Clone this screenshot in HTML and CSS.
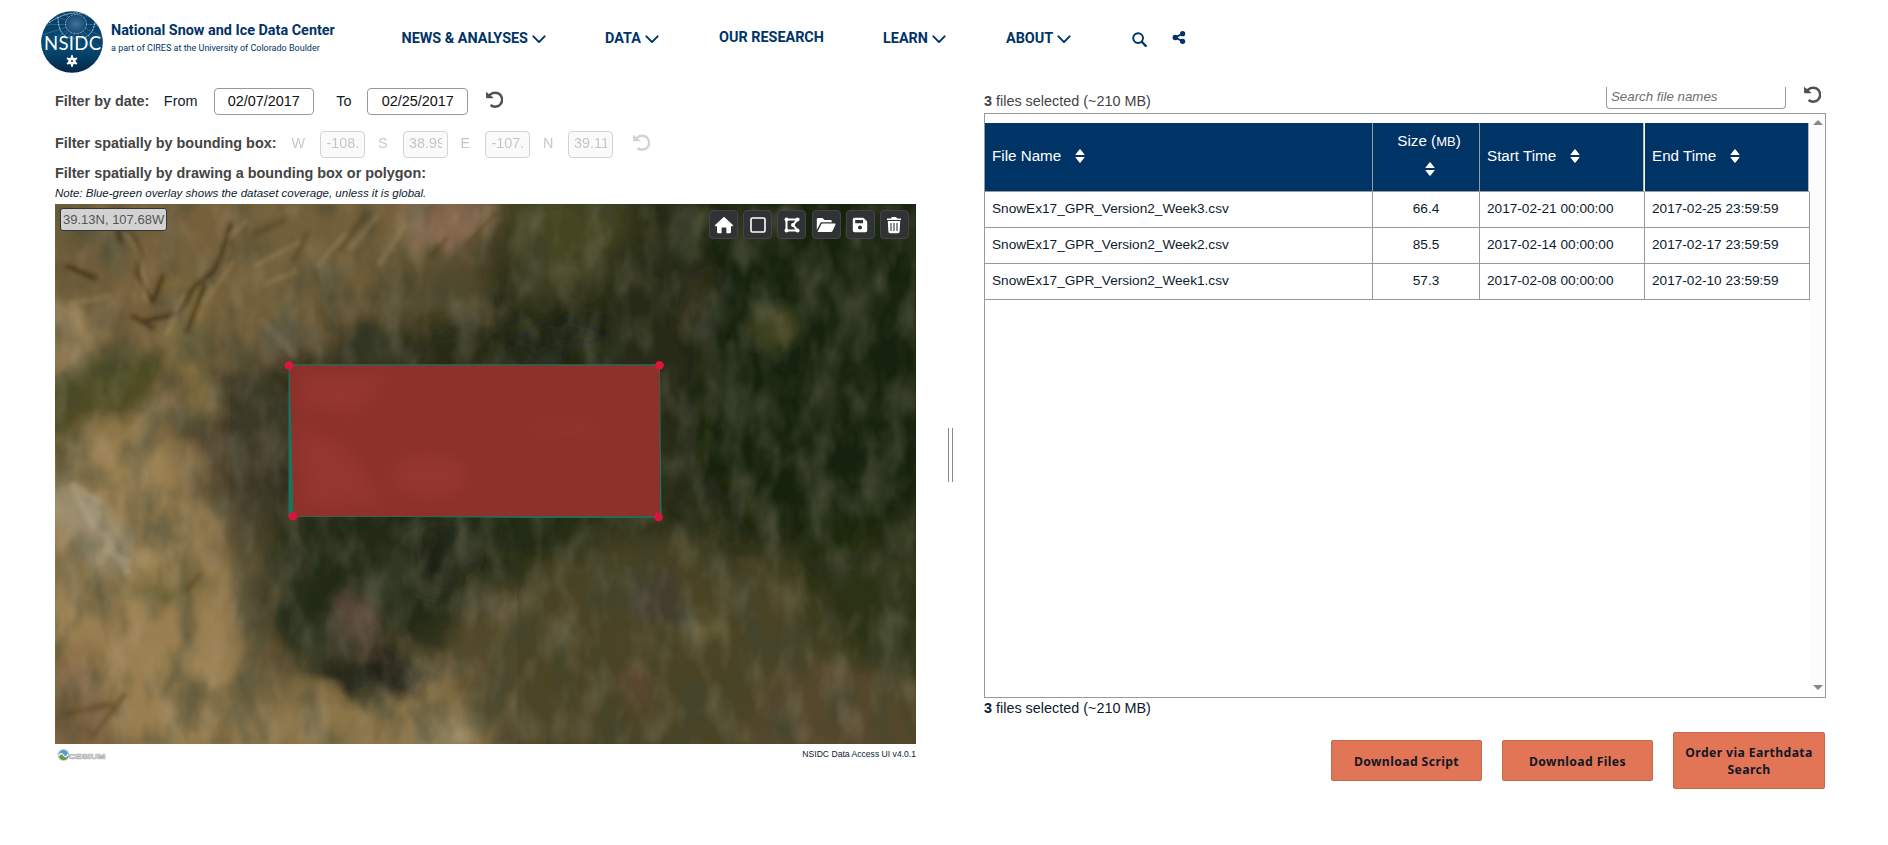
FILE: index.html
```html
<!DOCTYPE html>
<html lang="en">
<head>
<meta charset="utf-8">
<title>NSIDC Data Access</title>
<link rel="stylesheet" href="styles.css">
</head>
<body>
<svg width="0" height="0" class="defs">
  <symbol id="undo" viewBox="0 0 17 17"><path d="M2.6 6.2A7 7 0 1 1 4.6 14" fill="none" stroke="currentColor" stroke-width="2.5"/><path d="M0 .8L7.2 6.6 7 7.3H.9Q.1 7.3.1 6.5Z" fill="currentColor"/></symbol>
  <symbol id="chev" viewBox="0 0 14 9"><path d="M1.4 1.3L7 7.1 12.6 1.3" fill="none" stroke="currentColor" stroke-width="1.9" stroke-linecap="round" stroke-linejoin="round"/></symbol>
  <symbol id="sort" viewBox="0 0 10 14"><path d="M.2 6L4.4.6Q5 0 5.6.6L9.8 6ZM.2 8L4.4 13.4Q5 14 5.6 13.4L9.8 8Z" fill="#fff"/></symbol>
</svg>
<header class="header">
  <svg class="logo" viewBox="0 0 62 62">
    <defs>
      <linearGradient id="lg" x1="0" y1="0" x2="0" y2="1"><stop offset="0" stop-color="#063e68"/><stop offset=".6" stop-color="#064a74"/><stop offset="1" stop-color="#032748"/></linearGradient>
      <radialGradient id="lg2"><stop offset="0" stop-color="#44719a"/><stop offset="1" stop-color="#174b75"/></radialGradient>
      <clipPath id="lc"><circle cx="31" cy="31" r="30.8"/></clipPath>
    </defs>
    <g clip-path="url(#lc)">
      <rect width="62" height="62" fill="url(#lg)"/>
      <g fill="none" stroke="#b8ccdc" stroke-width=".5" opacity=".5">
        <path d="M35 13L-2 14M35 13L-2 25M35 13L2 36M35 13L12 36M35 13L22 36M35 13L31 36M35 13L40 36M35 13L49 36M35 13L58 36M35 13L64 27M35 13L64 14M35 13L8 3M35 13L18-2M35 13L54-1"/>
      </g>
      <ellipse cx="35" cy="13" rx="10" ry="9" fill="url(#lg2)"/>
      <g fill="none" stroke="#dbe7ef" stroke-width=".9" stroke-dasharray="2.5 .7" opacity=".85">
        <ellipse cx="35" cy="13" rx="10.5" ry="9.5" stroke-width=".6"/>
        <path d="M17 6Q17 28 35 28T54 9M8 12Q20 3 34 2T57 15"/>
      </g>
      <rect x="0" y="27" width="62" height="13" fill="#064570" opacity=".55"/>
      <text x="31.5" y="39" text-anchor="middle" class="logo-text" textLength="57">NSIDC</text>
      <g stroke="#fff" stroke-width="2" transform="translate(31 50)"><path d="M0-5.8V5.8M-5-2.9L5 2.9M-5 2.9L5-2.9"/><circle r="3" fill="none" stroke-width="1.5"/></g>
      <circle cx="31" cy="50" r="1" fill="#04345c"/>
    </g>
  </svg>
  <div class="brand"><div class="brand-name"><span>National Snow and Ice Data Center</span></div><div class="brand-sub">a part of CIRES at the University of Colorado Boulder</div></div>
  <nav class="nav">
    <a class="n1">NEWS &amp; ANALYSES<svg><use href="#chev"/></svg></a>
    <a class="n2">DATA<svg><use href="#chev"/></svg></a>
    <a class="n3">OUR RESEARCH</a>
    <a class="n4">LEARN<svg><use href="#chev"/></svg></a>
    <a class="n5">ABOUT<svg><use href="#chev"/></svg></a>
    <svg class="search" viewBox="0 0 15 15"><circle cx="6.1" cy="6.1" r="4.9" fill="none" stroke="#036" stroke-width="1.9"/><path d="M9.8 9.8L13.7 13.9" stroke="#036" stroke-width="2.3" stroke-linecap="round"/></svg>
    <svg class="share" viewBox="0 0 14 14"><g fill="#036"><circle cx="3" cy="7" r="2.9"/><circle cx="10.9" cy="2.9" r="2.8"/><circle cx="10.9" cy="11.1" r="2.8"/></g><path d="M11 2.8L3 7l8 4.2" fill="none" stroke="#036" stroke-width="1.9"/></svg>
  </nav>
</header>
<main class="main">
  <section class="left">
    <div class="row row-date"><b>Filter by date:</b><span class="from">From</span><div class="date">02/07/2017</div><span class="to">To</span><div class="date d2">02/25/2017</div><svg class="undo"><use href="#undo"/></svg></div>
    <div class="row row-box"><b>Filter spatially by bounding box:</b>
      <div class="faded"><span>W</span><div class="num"><i>-108.26</i></div><span>S</span><div class="num"><i>38.995</i></div><span>E</span><div class="num"><i>-107.87</i></div><span>N</span><div class="num"><i>39.11</i></div><svg class="undo"><use href="#undo"/></svg></div>
    </div>
    <div class="row row-draw"><b>Filter spatially by drawing a bounding box or polygon:</b></div>
    <div class="note"><span>Note: Blue-green overlay shows the dataset coverage, unless it is global.</span></div>
    <div class="map">
      <svg class="terrain" viewBox="0 0 861 540">
        <defs>
          <filter id="b1" x="-30%" y="-30%" width="160%" height="160%"><feGaussianBlur stdDeviation="18"/></filter>
          <filter id="b2" x="-40%" y="-40%" width="180%" height="180%"><feGaussianBlur stdDeviation="9"/></filter>
          <filter id="b3" x="-30%" y="-30%" width="160%" height="160%"><feGaussianBlur stdDeviation="2.2"/></filter>
          <filter id="warp" x="0" y="0" width="100%" height="100%"><feTurbulence type="fractalNoise" baseFrequency=".02" numOctaves="3" seed="4"/><feDisplacementMap in="SourceGraphic" scale="40" xChannelSelector="R" yChannelSelector="G"/></filter>
          <filter id="grainDark" x="0" y="0" width="100%" height="100%"><feTurbulence type="fractalNoise" baseFrequency=".028 .017" numOctaves="4" seed="8"/><feColorMatrix values="0 0 0 0 .05  0 0 0 0 .06  0 0 0 0 .03  2.8 0 0 0 -1.15"/><feGaussianBlur stdDeviation="1.2 2"/></filter>
          <filter id="grainLight" x="0" y="0" width="100%" height="100%"><feTurbulence type="fractalNoise" baseFrequency=".04 .022" numOctaves="4" seed="21"/><feColorMatrix values="0 0 0 0 .66  0 0 0 0 .56  0 0 0 0 .42  0 2.2 0 0 -.95"/><feGaussianBlur stdDeviation="1.2 2"/></filter>
        </defs>
        <rect width="861" height="540" fill="#574a2d"/>
        <g filter="url(#warp)">
        <g filter="url(#b1)">
          <path d="M-40-40H340L400 60 260 120 130 220 60 260-40 250Z" fill="#725e3b"/>
          <path d="M460-40H900V420H700L560 300 300 330 160 260 170 160 300 130 420 110Z" fill="#252b14"/>
          <path d="M640-40H900V360H740L640 260Z" fill="#172110"/>
          <path d="M450-20H580L560 60 480 100Z" fill="#444521"/>
          <path d="M110 165L230 150 240 320H130Z" fill="#3d3828"/>
          <path d="M230 300H640L520 360 440 380 350 480 250 485 215 420Z" fill="#242c15"/>
          <path d="M-30 260L110 190 150 290 180 400 220 560H-30Z" fill="#9a8053"/>
          <path d="M420 390L560 335 800 370 890 580H380Z" fill="#53482c"/>
          <path d="M720 360L900 330V480L800 470Z" fill="#2d3019"/>
          <path d="M170 490L380 450 460 580H170Z" fill="#8b7448"/>
        </g>
        <g filter="url(#b2)">
          <path d="M330-10H445L400 50 370 45Z" fill="#86674e"/>
          <path d="M-20 175L60 145 130 145 90 195-20 250Z" fill="#4a4924"/>
          <path d="M-10 85L40 130 35 160-10 170Z" fill="#95805a"/>
          <path d="M125 60L160 80 145 170 165 215 150 225 115 170Z" fill="#857243"/>
          <path d="M90 370L150 375 140 395 60 395Z" fill="#675e31"/>
          <path d="M-10 275L40 285 80 360 60 370-10 310Z" fill="#9c9073"/>
          <path d="M-10 440L45 455 70 560H-10Z" fill="#7b6040"/>
          <ellipse cx="720" cy="120" rx="27" ry="27" fill="#424420"/>
          <ellipse cx="640" cy="100" rx="14" ry="42" fill="#383524"/>
          <ellipse cx="500" cy="134" rx="55" ry="18" fill="#131d0a"/>
          <ellipse cx="302" cy="418" rx="20" ry="32" fill="#5c483b"/>
          <ellipse cx="312" cy="470" rx="60" ry="24" fill="#222416"/>
          <ellipse cx="385" cy="350" rx="35" ry="34" fill="#222518"/>
          <ellipse cx="604" cy="396" rx="24" ry="28" fill="#4c3f37"/>
          <ellipse cx="650" cy="420" rx="25" ry="10" fill="#75683f"/>
          <ellipse cx="456" cy="405" rx="16" ry="10" fill="#736850"/>
          <ellipse cx="584" cy="484" rx="16" ry="18" fill="#704e3b"/>
          <ellipse cx="395" cy="522" rx="26" ry="16" fill="#988763"/>
          <path d="M710 470L820 460 880 560H690Z" fill="#614d30"/>
          <path d="M330 65L440 80 420 120 290 110Z" fill="#544b2e"/>
          <ellipse cx="224" cy="134" rx="26" ry="20" fill="#6e624c"/>
        </g>
        </g>
        <rect width="175" height="540" fill="#9a7840" opacity=".08"/>
        <rect x="462" y="300" width="399" height="240" fill="#26300e" opacity=".18"/>
        <rect width="861" height="540" filter="url(#grainDark)" opacity=".55"/>
        <rect width="861" height="540" filter="url(#grainLight)" opacity=".2"/>
        <g filter="url(#b3)" fill="none" stroke-linecap="round">
          <path d="M68 22Q92 45 82 68L96 96M165 55L158 68 140 82 122 110 86 118M150 80L132 128M58 8L66 38M108 72L98 98M12 62L40 74M176 20L166 52M78 112L98 124" stroke="#2f210c" stroke-width="3" opacity=".8"/>
          <path d="M72 30Q92 55 90 95M190 18L176 32M128 92L112 130M178 58L150 98M200 62L245 38M15 100L55 92M210 80L240 68M290 30L262 62M322 12L296 44M350 20L325 60" stroke="#a18b5d" stroke-width="3.5" opacity=".5"/>
          <path d="M310 12L284 46M200 30L230 16M252 30L238 58M440 10L412 40M392 34L376 52" stroke="#4c3b1c" stroke-width="4" opacity=".55"/>
          <path d="M22 290L38 322M50 330L60 350 72 368M18 282L45 298M52 346L72 358" stroke="#b0a68b" stroke-width="7" opacity=".5"/>
          <path d="M208 118L238 150" stroke="#867961" stroke-width="8" opacity=".35"/>
          <path d="M38 532L70 490M10 510L55 500M132 386L145 370" stroke="#493617" stroke-width="4" opacity=".5"/>
          <path d="M370 372L400 325" stroke="#161b0e" stroke-width="7" opacity=".6"/>
          <path d="M676 140V215" stroke="#3c4536" stroke-width="7" opacity=".5"/>
        </g>
        <path d="M233.5 160.3H605L606.5 314H480L350 313H233.5Z" fill="#187461"/>
        <path d="M234.5 161.6H604.5L605 312.3H238.5L237 250Z" fill="#8d312b"/>
        <g filter="url(#b2)" fill="#a34338" opacity=".4"><path d="M245 172H335L300 210 250 200Z"/><path d="M245 225L290 240 330 300 250 302Z"/><ellipse cx="375" cy="272" rx="38" ry="22"/><ellipse cx="510" cy="225" rx="40" ry="8" opacity=".6"/></g>
        <g fill="#dc143c"><circle cx="234" cy="161.3" r="4.3"/><circle cx="604.5" cy="161.3" r="4.3"/><circle cx="238" cy="312.3" r="4.3"/><circle cx="603.5" cy="313" r="4.3"/></g>
      </svg>
      <div class="coords">39.13N, 107.68W</div>
      <div class="tools">
        <div class="tool"><svg viewBox="0 0 20 20"><path d="M10 1.8L.8 10.2Q.8 11.2 2 11.2H3V17Q3 18.2 4.2 18.2H7.6V13.5Q7.6 12.6 8.5 12.6H11.5Q12.4 12.6 12.4 13.5V18.2H15.8Q17 18.2 17 17V11.2H18Q19.2 11.2 19.2 10.2Z" fill="#fff"/></svg></div>
        <div class="tool"><svg viewBox="0 0 20 20"><rect x="3" y="3" width="14" height="14" rx="1.5" fill="none" stroke="#fff" stroke-width="1.6"/></svg></div>
        <div class="tool"><svg viewBox="0 0 20 20"><path d="M4.5 4.5H15.5L11 10 15.5 15.5H4.5Z" fill="none" stroke="#fff" stroke-width="2"/><g fill="#fff"><circle cx="4.5" cy="4.5" r="2"/><circle cx="15.5" cy="4.5" r="2"/><circle cx="11" cy="10" r="2"/><circle cx="15.5" cy="15.5" r="2"/><circle cx="4.5" cy="15.5" r="2"/></g></svg></div>
        <div class="tool"><svg viewBox="0 0 20 20"><path d="M.8 15V4.2Q.8 3 2 3H6.5L8.5 5H14.5Q15.8 5 15.8 6.3V7.3H6Q4.7 7.3 4.1 8.5ZM1.5 17L5.2 9.5Q5.6 8.5 6.7 8.5H18.8Q20 8.5 19.4 9.8L16.5 16Q16 17 15 17Z" fill="#fff"/></svg></div>
        <div class="tool"><svg viewBox="0 0 20 20"><path fill-rule="evenodd" d="M4.5 2.8H13.4L17.2 6.6V15.5Q17.2 17.2 15.5 17.2H4.5Q2.8 17.2 2.8 15.5V4.5Q2.8 2.8 4.5 2.8ZM5.2 5V8.2H13V5ZM10 10.5A2 2 0 1 0 10 14.6A2 2 0 1 0 10 10.5Z" fill="#fff"/></svg></div>
        <div class="tool"><svg viewBox="0 0 20 20"><path d="M3 3.4H7L7.8 2H12.2L13 3.4H17V5H3ZM3.8 6H16.2L15.6 16.8Q15.5 18.2 14 18.2H6Q4.5 18.2 4.4 16.8Z" fill="#fff"/><path d="M7 8V16M10 8V16M13 8V16" stroke="#303336" stroke-width="1.1"/></svg></div>
      </div>
    </div>
    <div class="credit">
      <svg class="cesium" viewBox="0 0 52 14"><circle cx="6.5" cy="7" r="6" fill="#ccc"/><circle cx="6.5" cy="7" r="4.9" fill="#549ed0"/><path d="M1.7 8.3Q4 3.5 6.5 7.3T11.3 8Q10 12 6.5 11.9T1.7 8.3Z" fill="#6d9e3e"/><path d="M1.7 8.2Q4 3.5 6.5 7.3T11 5.7" fill="none" stroke="#fff" stroke-width="1.1"/><text x="11.5" y="10.5" textLength="37" lengthAdjust="spacingAndGlyphs" class="cesium-text">CESIUM</text></svg>
      <span class="version">NSIDC Data Access UI v4.0.1</span>
    </div>
  </section>
  <div class="splitter"></div>
  <section class="right">
    <div class="top"><div class="count"><b>3</b> files selected (~210 MB)</div><div class="find"><div class="find-input">Search file names</div><svg class="undo"><use href="#undo"/></svg></div></div>
    <div class="files">
      <div class="table">
        <div class="tr th"><div class="c">File Name<svg class="sort"><use href="#sort"/></svg></div><div class="c size"><span>Size (<small>MB</small>)</span><svg class="sort"><use href="#sort"/></svg></div><div class="c gap">Start Time<svg class="sort"><use href="#sort"/></svg></div><div class="c gap">End Time<svg class="sort"><use href="#sort"/></svg></div></div>
        <div class="tr"><div class="c">SnowEx17_GPR_Version2_Week3.csv</div><div class="c size">66.4</div><div class="c">2017-02-21 00:00:00</div><div class="c">2017-02-25 23:59:59</div></div>
        <div class="tr"><div class="c">SnowEx17_GPR_Version2_Week2.csv</div><div class="c size">85.5</div><div class="c">2017-02-14 00:00:00</div><div class="c">2017-02-17 23:59:59</div></div>
        <div class="tr"><div class="c">SnowEx17_GPR_Version2_Week1.csv</div><div class="c size">57.3</div><div class="c">2017-02-08 00:00:00</div><div class="c">2017-02-10 23:59:59</div></div>
      </div>
      <div class="scroll"><svg viewBox="0 0 10 5"><path d="M0 5L5 0 10 5Z" fill="#868686"/></svg><svg viewBox="0 0 10 5"><path d="M0 0L5 5 10 0Z" fill="#868686"/></svg></div>
    </div>
    <div class="count bottom"><b>3</b> files selected (~210 MB)</div>
    <div class="buttons"><div class="btn">Download Script</div><div class="btn">Download Files</div><div class="btn tall">Order via Earthdata<br>Search</div></div>
  </section>
</main>
</body>
</html>
```
FILE: styles.css
```css
* { box-sizing: border-box; }
body { margin: 0; width: 1888px; height: 845px; overflow: hidden; background: #fff; color: #0c1b2e; font: 14.4px "Liberation Sans", Arial, sans-serif; }
svg { display: block; flex: none; }
.defs { position: absolute; }
.header { height: 87px; display: flex; align-items: flex-start; padding: 11px 0 0 41px; color: #036; font-family: Roboto, sans-serif; }
.logo { width: 62px; height: 62px; }
.logo-text { font: 18.5px Lato, sans-serif; fill: #fff; }
.brand { margin: 10px 0 0 8px; width: 290.5px; white-space: nowrap; }
.brand-name { font-size: 14.4px; font-weight: 700; line-height: 20px; }
.brand-sub { font-size: 9px; line-height: 12px; margin-top: 1px; }
.nav { display: flex; padding-top: 18px; font-size: 14.4px; font-weight: 700; line-height: 20px; }
.nav a { display: flex; align-items: center; white-space: nowrap; }
.nav a svg { width: 14px; height: 9px; margin-left: 4px; }
.n1 { width: 203.5px; }
.n2 { width: 114px; }
.n3 { width: 164px; margin-top: -2px; }
.n4 { width: 123px; }
.n5 { width: 125.5px; }
.search { width: 15px; height: 15px; margin-top: 3px; }
.share { width: 14px; height: 13px; margin: 2px 0 0 25px; }
.main { display: flex; }
.left { width: 861px; margin-left: 55px; }
.row { display: flex; align-items: center; white-space: nowrap; }
.row b { color: #444; }
.row-date { height: 28px; }
.from { margin-left: 14.5px; width: 50px; }
.date { width: 100px; height: 27px; margin-top: 1px; border: 1px solid #999; border-radius: 4px; display: flex; align-items: center; justify-content: center; color: #111; padding-bottom: 1px; }
.to { margin-left: 22.5px; width: 31px; }
.d2 { width: 101px; }
.undo { width: 17px; height: 17px; color: #505050; }
.row-date .undo { margin: -3px 0 0 18px; }
.row-box { height: 27px; margin-top: 15px; }
.row-box b { margin-top: -1px; }
.faded { display: flex; align-items: center; margin: 1px 0 0 15px; opacity: .25; }
.faded span { width: 13px; margin: -2px 16px 0 0; }
.faded .num { margin-right: 12.5px; }
.faded span:nth-of-type(n+2) { width: 10px; margin-right: 15px; }
.faded .undo { margin: -4px 0 0 8px; color: #505050; }
.num { width: 45px; height: 27px; border: 1px solid #555; border-radius: 4px; padding: 0 5px; background: #eee; }
.num i { display: block; overflow: hidden; font-style: normal; line-height: 23px; }
.row-draw { height: 22px; margin-top: 5px; }
.note { height: 20px; line-height: 19px; font-size: 11.53px; font-style: italic; white-space: nowrap; }
.map { position: relative; width: 861px; height: 540px; overflow: hidden; }
.terrain { width: 861px; height: 540px; }
.coords { position: absolute; left: 5px; top: 4px; width: 107px; height: 23px; border: 1px solid #30343a; border-radius: 3px; background: #d2d2d2; color: #555; font-size: 13px; line-height: 21px; padding-left: 2px; white-space: nowrap; }
.tools { position: absolute; left: 654px; top: 6px; display: flex; gap: 5.2px; }
.tool { width: 29px; height: 29px; background: #303336; border: 1px solid #444; border-radius: 4px; display: flex; align-items: center; justify-content: center; }
.tool svg { width: 20px; height: 20px; }
.credit { height: 22px; display: flex; justify-content: space-between; padding: 4px 0 0 2px; }
.cesium { width: 52px; height: 14px; }
.cesium-text { font: bold 7.5px "Liberation Sans", sans-serif; fill: #fff; stroke: #b4b4b4; stroke-width: .7px; }
.version { font-size: 8.6px; line-height: 12px; white-space: nowrap; }
.splitter { width: 5px; height: 54px; margin: 341px 31px 0 32px; border: solid #888; border-width: 0 1px; }
.right { width: 842px; }
.top { height: 26px; display: flex; justify-content: space-between; }
.count { color: #444; line-height: 28px; white-space: nowrap; }
.find { display: flex; margin-right: 5px; }
.find-input { width: 180px; height: 22px; border: 1px solid #999; border-top: 0; border-radius: 0 0 4px 4px; padding-left: 4px; font-size: 13.3px; font-style: italic; color: #6e6e6e; line-height: 20px; }
.find .undo { margin-left: 18px; margin-top: -1px; }
.files { height: 585px; border: 1px solid #999; display: flex; }
.table { width: 825px; padding-top: 9px; }
.tr { display: grid; grid-template-columns: 388px 107px 165px 165px; height: 36px; }
.c { display: flex; align-items: center; padding: 0 0 3px 7px; border: solid #999; border-width: 0 1px 1px 0; font-size: 13.64px; white-space: nowrap; }
.th { height: 69px; color: #fff; }
.th .c { font-size: 15.2px; background: #036; padding-bottom: 3px; }
.th .gap { border-right-color: #fff; box-shadow: inset -1px 0 #aeb9c5; }
.size { justify-content: center; padding-left: 0; }
.th .size { flex-direction: column; gap: 10px; padding: 0 0 7px; line-height: 20px; }
.th .size span { margin-left: 6px; }
.size small { font-size: 13px; }
.sort { width: 10px; height: 14px; margin-left: 14px; }
.size .sort { margin-left: 7px; }
.scroll { width: 15px; background: #fcfcfc; display: flex; flex-direction: column; justify-content: space-between; align-items: center; padding: 6px 0 7px; }
.scroll svg { width: 10px; height: 5px; }
.bottom { color: #0c1b2e; line-height: 20px; height: 34px; }
.buttons { display: flex; align-items: center; justify-content: flex-end; gap: 20px; padding-right: 1px; }
.btn { width: 151px; height: 41px; display: flex; align-items: center; justify-content: center; text-align: center; background: #e17556; border: 1px solid #c4694f; border-radius: 2px; color: #111827; font: 700 12.2px/17px "Noto Sans", sans-serif; letter-spacing: .4px; padding-top: 1px; white-space: nowrap; }
.tall { width: 152px; height: 57px; }
```
